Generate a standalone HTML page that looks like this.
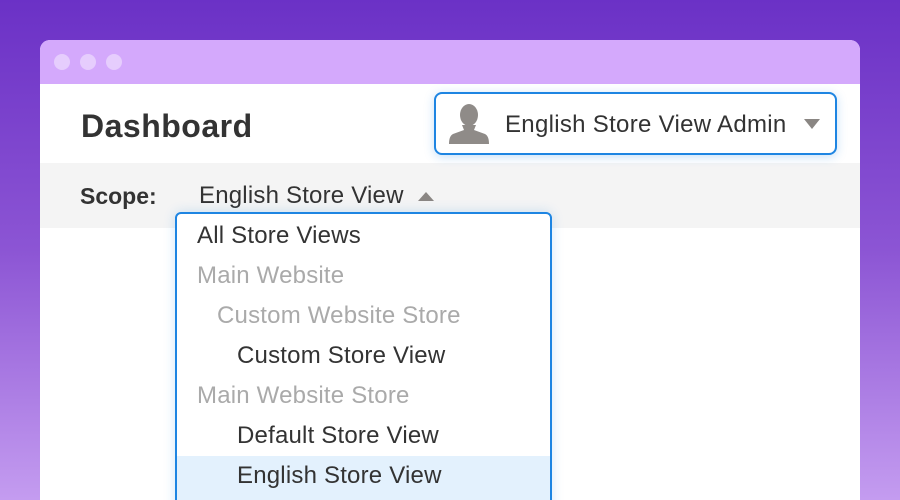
<!DOCTYPE html>
<html><head><style>
*{margin:0;padding:0;box-sizing:border-box}
html,body{width:900px;height:500px;overflow:hidden}
body{background:linear-gradient(180deg,#6b31c6 0%,#8c55d4 50%,#c49cf0 100%);font-family:"Liberation Sans",sans-serif;position:relative}
.win{position:absolute;left:40px;top:40px;width:820px;height:460px;background:#fff;border-radius:10px 10px 0 0;overflow:hidden}
.tb{height:44px;background:#d4a9fc;position:relative}
.dot{position:absolute;top:14px;width:16px;height:16px;border-radius:50%;background:#e6cdfd}
.t{position:absolute;white-space:nowrap;color:#333}
.bar{position:absolute;left:0;top:123px;width:820px;height:65px;background:#f4f4f4}
.admin{position:absolute;left:394px;top:52px;width:403px;height:63px;border:2px solid #1e85e2;border-radius:8px;background:#fff;box-shadow:0 2px 10px rgba(30,133,226,.25)}
.dd{position:absolute;left:135px;top:172px;width:377px;height:340px;border:2px solid #1e85e2;border-radius:6px;background:#fff;box-shadow:0 0 12px rgba(30,133,226,.2)}
.it{position:absolute;font-size:24px;letter-spacing:0.2px;color:#333;white-space:nowrap;line-height:40px;height:40px;left:0;right:0}
.g{color:#aaa}
</style></head><body>
<div class="win">
<div class="tb"><div class="dot" style="left:14px"></div><div class="dot" style="left:40px"></div><div class="dot" style="left:66px"></div></div>
<div class="t" style="left:41px;top:68px;font-size:32px;font-weight:bold;letter-spacing:0.5px">Dashboard</div>
<div class="bar"></div>
<div class="t" style="left:40px;top:143px;font-size:23px;font-weight:bold">Scope:</div>
<div class="t" style="left:159px;top:142px;font-size:24px;letter-spacing:0.2px">English Store View</div>
<div style="position:absolute;left:378px;top:152px;width:0;height:0;border-left:8px solid transparent;border-right:8px solid transparent;border-bottom:9px solid #8a8683"></div>
<div class="admin">
<svg style="position:absolute;left:12px;top:10px" width="42" height="40" viewBox="0 0 42 40"><ellipse cx="21" cy="11" rx="9" ry="11" fill="#8f8b88"/><path d="M14 21 L16 26 L5 30 Q1 32 1 40 L41 40 Q41 32 37 30 L26 26 L28 21 Z" fill="#8f8b88"/></svg>
<div class="t" style="left:69px;top:17px;font-size:24px;letter-spacing:0.3px">English Store View Admin</div>
<div style="position:absolute;left:368px;top:25px;width:0;height:0;border-left:8px solid transparent;border-right:8px solid transparent;border-top:10px solid #8a8683"></div>
</div>
<div class="dd">
<div class="it" style="top:2px;padding-left:20px">All Store Views</div>
<div class="it g" style="top:42px;padding-left:20px">Main Website</div>
<div class="it g" style="top:82px;padding-left:40px">Custom Website Store</div>
<div class="it" style="top:122px;padding-left:60px">Custom Store View</div>
<div class="it g" style="top:162px;padding-left:20px">Main Website Store</div>
<div class="it" style="top:202px;padding-left:60px">Default Store View</div>
<div class="it" style="top:242px;padding-left:60px;background:#e3f1fd;height:44px">English Store View</div>
</div>
</div>
</body></html>
